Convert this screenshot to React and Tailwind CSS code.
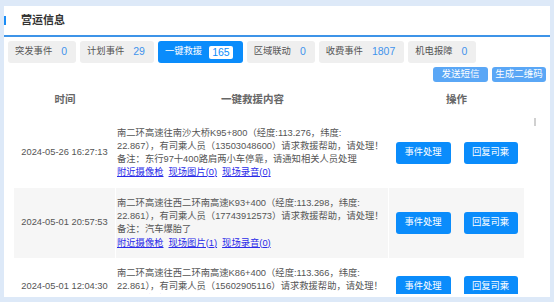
import React from "react";

const FONT = "font-['Liberation_Sans','Noto_Sans_CJK_SC',sans-serif]";

const tabs = [
  { name: "突发事件", count: 0 },
  { name: "计划事件", count: 29 },
  { name: "一键救援", count: 165, active: true },
  { name: "区域联动", count: 0 },
  { name: "收费事件", count: 1807 },
  { name: "机电报障", count: 0 },
];

const rows = [
  {
    time: "2024-05-26 16:27:13",
    lines: [
      "南二环高速往南沙大桥K95+800（经度:113.276，纬度:",
      "22.867），有司乘人员（13503048600）请求救援帮助，请处理！",
      "备注：东行97十400路肩两小车停靠，请通知相关人员处理",
    ],
    pics: 0,
    audio: 0,
  },
  {
    time: "2024-05-01 20:57:53",
    lines: [
      "南二环高速往西二环南高速K93+400（经度:113.298，纬度:",
      "22.861），有司乘人员（17743912573）请求救援帮助，请处理！",
      "备注：汽车爆胎了",
    ],
    pics: 1,
    audio: 0,
  },
  {
    time: "2024-05-01 12:04:30",
    lines: [
      "南二环高速往西二环南高速K86+400（经度:113.366，纬度:",
      "22.861），有司乘人员（15602905116）请求救援帮助，请处理！",
    ],
    pics: 0,
    audio: 0,
  },
];

function Tab({ name, count, active }) {
  if (active) {
    return (
      <div className="flex h-[22px] items-center gap-[7px] rounded-[3px] bg-[#0a8cfb] pl-[7px] pr-[10px] text-white">
        <span>{name}</span>
        <span className="rounded-[2px] bg-white px-[3px] text-[10.5px] leading-[13px] text-[#0a8cfb]">{count}</span>
      </div>
    );
  }
  return (
    <div className="flex h-[22px] items-center gap-[9px] rounded-[3px] bg-[#efefef] pl-[7px] pr-[9px] text-[#555]">
      <span>{name}</span>
      <span className="text-[10.5px] text-[#3f93ec]">{count}</span>
    </div>
  );
}

function Row({ row, striped }) {
  return (
    <div className={`flex ${striped ? "bg-[#f6f6f6]" : "bg-white"}`}>
      <div className="flex w-[102px] shrink-0 items-center justify-center border-r border-white text-[#555]">
        {row.time}
      </div>
      <div className="w-[273px] shrink-0 border-r border-white py-[8.5px] pl-[1px] leading-[13.3px] text-[#555]">
        {row.lines.map((l) => (
          <div key={l} className="whitespace-nowrap">{l}</div>
        ))}
        <div className="flex gap-[5px] whitespace-nowrap text-[#2b2be8]">
          <span className="underline">附近摄像枪</span>
          <span className="underline">现场图片({row.pics})</span>
          <span className="underline">现场录音({row.audio})</span>
        </div>
      </div>
      <div className="flex flex-1 items-center justify-center gap-[13px]">
        <button className="h-[22px] w-[55px] rounded-[3px] bg-[#0a8cfb] text-white">事件处理</button>
        <button className="h-[22px] w-[54px] rounded-[3px] bg-[#0a8cfb] text-white">回复司乘</button>
      </div>
    </div>
  );
}

export default function App() {
  return (
    <div className={`h-[302px] w-[554px] overflow-hidden bg-[#dde9f8] pl-[4px] pt-[6px] text-[9.3px] ${FONT}`}>
      <div className="relative h-[291px] w-[546px] overflow-hidden bg-white">
        <div className="flex h-[29px] items-center">
          <div className="h-[9px] w-[2px] bg-[#1a8cf5]" />
          <div className="ml-[15px] text-[11px] font-semibold text-[#333]">营运信息</div>
        </div>
        <div className="h-[2px] bg-[#3d94e8]" />

        <div className="mt-[4px] flex gap-[4px] pl-[4px]">
          {tabs.map((t) => (
            <Tab key={t.name} {...t} />
          ))}
        </div>

        <div className="mt-[4px] flex justify-end gap-[4px] pr-[4px]">
          <button className="h-[15px] w-[55px] rounded-[3px] bg-[#5aa7f6] text-[9.5px] text-white">发送短信</button>
          <button className="h-[15px] w-[54px] rounded-[3px] bg-[#5aa7f6] text-[9.5px] text-white">生成二维码</button>
        </div>

        <div className="ml-[10px] w-[510px]">
          <div className="flex h-[36px] items-center text-[10.5px] font-semibold text-[#666]">
            <div className="w-[102px] text-center">时间</div>
            <div className="w-[273px] text-center">一键救援内容</div>
            <div className="flex-1 text-center">操作</div>
          </div>
          <div className="h-[176px] overflow-hidden">
            {rows.map((r, i) => (
              <Row key={r.time} row={r} striped={i % 2 === 1} />
            ))}
          </div>
        </div>

        <div className="absolute left-[530px] top-[112px] h-[8px] w-[2px] bg-[#d0d0d0]" />
      </div>
    </div>
  );
}
